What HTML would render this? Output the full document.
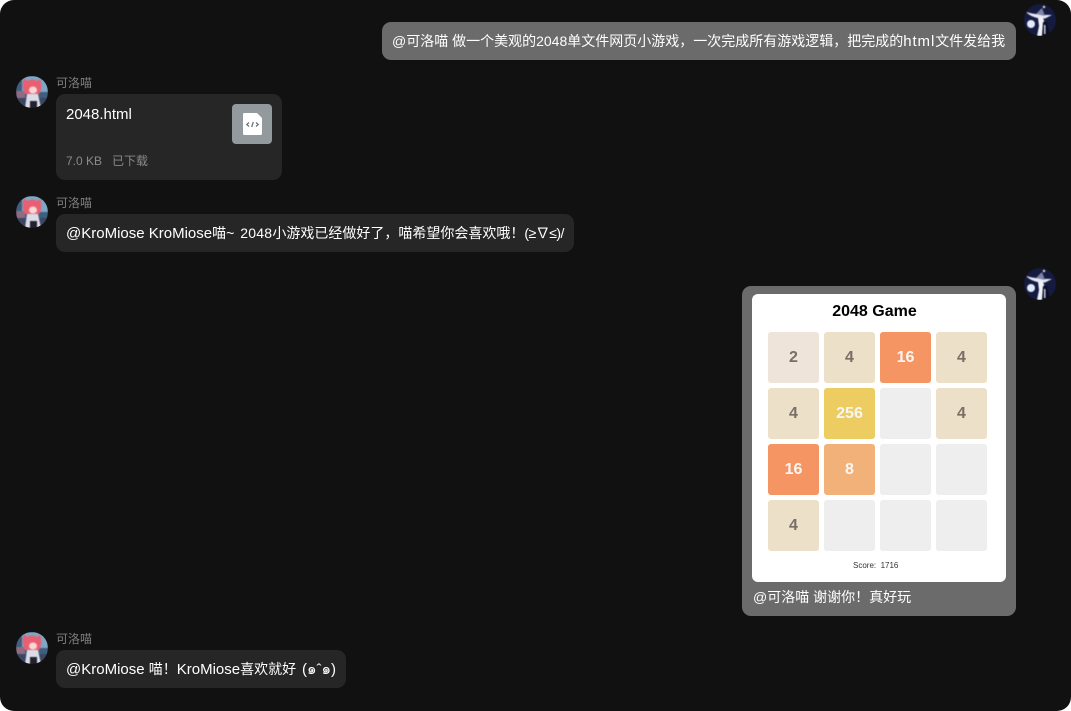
<!DOCTYPE html>
<html lang="zh"><head><meta charset="utf-8"><style>
html,body{margin:0;padding:0;width:1071px;height:711px;overflow:hidden;background:#fff}
#w{position:absolute;left:0;top:0;width:1071px;height:711px;background:#111;border-radius:14px;overflow:hidden;font-family:"Liberation Sans","Noto Sans CJK SC",sans-serif;font-size:14px;color:#fff}
#w div{position:absolute;white-space:nowrap}
.b{border-radius:9px;background:#262626;height:38px;line-height:38px;box-sizing:border-box;padding-left:10px}
.n{font-size:12px;color:#7e7e7e;left:56px;line-height:14px}
.a{width:32px;height:32px;border-radius:50%;overflow:hidden}
.a svg{display:block;filter:blur(.45px)}
.l{font-size:15px}
.t{width:51px;height:51px;border-radius:3px;background:#eee;text-align:center;font:bold 16px/51px "Liberation Sans",sans-serif;color:#776e65}
.t2{background:#eee4da}.t4{background:#ede0c8}.t16{background:#f59563;color:#f9f6f2}.t8{background:#f2b179;color:#f9f6f2}.t256{background:#edcc61;color:#f9f6f2}
</style></head><body><div id="w">

<div class="a" style="left:1024px;top:4px"><svg width="32" height="32" viewBox="0 0 32 32"><rect x="-1" y="-1" width="34" height="34" fill="#151a40"/><circle cx="7" cy="20" r="4" fill="#e3ebff"/><path d="M2 8 Q12 11 28 11 L21 14.500 Q9 15 2 8Z" fill="#e6e8f4"/><path d="M12 10 L18 4 L21 12Z" fill="#7f84a8"/><circle cx="20" cy="3" r="1.200" fill="#e8e2b0"/><path d="M14 14 Q18 12 20 16 L20 24 L18 32 L13 32 L15 22Z" fill="#eff1f9"/><path d="M19 18 L23 18 L26 32 L18 32Z" fill="#0b0d20"/><rect x="20" y="21" width="1.500" height="9" fill="#c9cce0"/></svg></div>
<div class="b" style="left:382px;top:22px;width:634px;background:#6b6b6b">@可洛喵 做一个美观的2048单文件网页小游戏，一次完成所有游戏逻辑，把完成的<span class="l" style="letter-spacing:.9px">html</span>文件发给我</div>

<div class="a" style="left:16px;top:76px"><svg width="32" height="32" viewBox="0 0 32 32"><rect x="-1" y="-1" width="34" height="34" fill="#3e5f7d"/><rect x="6" y="0" width="26" height="16" fill="#7fa6c4"/><rect x="0" y="15" width="9" height="7" fill="#8f6c84"/><rect y="22" width="32" height="10" fill="#3a4663"/><path d="M8 2 L11 5 Q16 2 21 5 L24 3 Q27 12 23 18 L9 18 Q5 10 8 2Z" fill="#e95f71"/><ellipse cx="17" cy="14" rx="4" ry="3.500" fill="#f7d8d2"/><path d="M11 18 L22 18 L25 32 L9 32Z" fill="#dcdce8"/><rect x="14" y="25" width="7" height="7" fill="#22222f"/></svg></div>
<div class="n" style="top:76px">可洛喵</div>
<div style="left:56px;top:94px;width:226px;height:86px;background:#262626;border-radius:9px"></div>
<div class="l" style="left:66px;top:105px;line-height:20px">2048.html</div>
<div style="left:66px;top:153px;font-size:12px;line-height:17px;color:#8a8a8a">7.0 KB</div>
<div style="left:112px;top:153px;font-size:12px;line-height:17px;color:#8a8a8a">已下载</div>
<div style="left:232px;top:104px;width:40px;height:40px;border-radius:4px;background:#929a9d"><svg width="40" height="40" viewBox="0 0 40 40" style="display:block"><path d="M11 10.500 Q11 9 12.500 9 L25 9 L30 14 L30 29.500 Q30 31 28.500 31 L12.500 31 Q11 31 11 29.500Z" fill="#fff"/><path d="M17 18.500 L14.800 20.500 L17 22.500 M24 18.500 L26.200 20.500 L24 22.500 M21.300 18 L19.700 23" stroke="#6f7679" stroke-width="1.300" fill="none"/></svg></div>

<div class="a" style="left:16px;top:196px"><svg width="32" height="32" viewBox="0 0 32 32"><rect x="-1" y="-1" width="34" height="34" fill="#3e5f7d"/><rect x="6" y="0" width="26" height="16" fill="#7fa6c4"/><rect x="0" y="15" width="9" height="7" fill="#8f6c84"/><rect y="22" width="32" height="10" fill="#3a4663"/><path d="M8 2 L11 5 Q16 2 21 5 L24 3 Q27 12 23 18 L9 18 Q5 10 8 2Z" fill="#e95f71"/><ellipse cx="17" cy="14" rx="4" ry="3.500" fill="#f7d8d2"/><path d="M11 18 L22 18 L25 32 L9 32Z" fill="#dcdce8"/><rect x="14" y="25" width="7" height="7" fill="#22222f"/></svg></div>
<div class="n" style="top:196px">可洛喵</div>
<div class="b" style="left:56px;top:214px;width:518px"><span class="l">@KroMiose KroMiose</span>喵<span style="letter-spacing:1px">~ </span><span style="letter-spacing:.25px">2048</span>小游戏已经做好了，喵希望你会喜欢哦！<span style="letter-spacing:-.5px">(≥∇≤)/</span></div>

<div class="a" style="left:1024px;top:268px"><svg width="32" height="32" viewBox="0 0 32 32"><rect x="-1" y="-1" width="34" height="34" fill="#151a40"/><circle cx="7" cy="20" r="4" fill="#e3ebff"/><path d="M2 8 Q12 11 28 11 L21 14.500 Q9 15 2 8Z" fill="#e6e8f4"/><path d="M12 10 L18 4 L21 12Z" fill="#7f84a8"/><circle cx="20" cy="3" r="1.200" fill="#e8e2b0"/><path d="M14 14 Q18 12 20 16 L20 24 L18 32 L13 32 L15 22Z" fill="#eff1f9"/><path d="M19 18 L23 18 L26 32 L18 32Z" fill="#0b0d20"/><rect x="20" y="21" width="1.500" height="9" fill="#c9cce0"/></svg></div>
<div style="left:742px;top:286px;width:274px;height:330px;background:#6b6b6b;border-radius:9px"></div>
<div style="left:752px;top:294px;width:254px;height:288px;background:#fff;border-radius:6px"></div>
<div style="left:752px;top:303px;width:245px;text-align:center;font:bold 16px/18px 'Liberation Sans',sans-serif;color:#000">2048 Game</div>

<div class="t t2" style="left:768px;top:332px">2</div>
<div class="t t4" style="left:824px;top:332px">4</div>
<div class="t t16" style="left:880px;top:332px">16</div>
<div class="t t4" style="left:936px;top:332px">4</div>
<div class="t t4" style="left:768px;top:388px">4</div>
<div class="t t256" style="left:824px;top:388px">256</div>
<div class="t" style="left:880px;top:388px"></div>
<div class="t t4" style="left:936px;top:388px">4</div>
<div class="t t16" style="left:768px;top:444px">16</div>
<div class="t t8" style="left:824px;top:444px">8</div>
<div class="t" style="left:880px;top:444px"></div>
<div class="t" style="left:936px;top:444px"></div>
<div class="t t4" style="left:768px;top:500px">4</div>
<div class="t" style="left:824px;top:500px"></div>
<div class="t" style="left:880px;top:500px"></div>
<div class="t" style="left:936px;top:500px"></div>

<div style="left:853px;top:561px;font:8px/10px 'Liberation Sans',sans-serif;color:#333">Score:&nbsp; 1716</div>
<div style="left:753px;top:587px;line-height:20px">@可洛喵 谢谢你！真好玩</div>

<div class="a" style="left:16px;top:632px"><svg width="32" height="32" viewBox="0 0 32 32"><rect x="-1" y="-1" width="34" height="34" fill="#3e5f7d"/><rect x="6" y="0" width="26" height="16" fill="#7fa6c4"/><rect x="0" y="15" width="9" height="7" fill="#8f6c84"/><rect y="22" width="32" height="10" fill="#3a4663"/><path d="M8 2 L11 5 Q16 2 21 5 L24 3 Q27 12 23 18 L9 18 Q5 10 8 2Z" fill="#e95f71"/><ellipse cx="17" cy="14" rx="4" ry="3.500" fill="#f7d8d2"/><path d="M11 18 L22 18 L25 32 L9 32Z" fill="#dcdce8"/><rect x="14" y="25" width="7" height="7" fill="#22222f"/></svg></div>
<div class="n" style="top:632px">可洛喵</div>
<div class="b" style="left:56px;top:650px;width:290px"><span class="l">@KroMiose </span>喵！<span class="l">KroMiose</span>喜欢就好 <span style="font-size:15px;margin-left:2px">(๑ˆ๑)</span></div>

</div></body></html>
